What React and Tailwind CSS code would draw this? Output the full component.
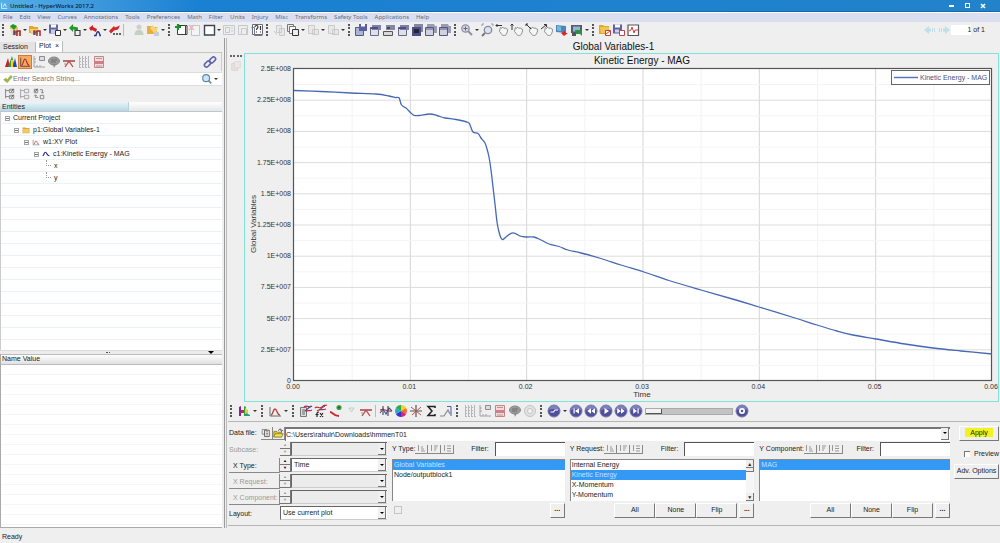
import React, { useState } from 'react';

const MENUS = ['File', 'Edit', 'View', 'Curves', 'Annotations', 'Tools', 'Preferences', 'Math', 'Filter', 'Units', 'Injury', 'Misc', 'Transforms', 'Safety Tools', 'Applications', 'Help'];

const PLOT = { left: 49, top: 15, right: 747, bottom: 327 };

const CURVE = [
  [49, 36.5], [76, 37.5], [106, 39], [131, 40], [144, 42], [150, 43.5], [154, 43.8], [156.5, 51], [161, 54], [166, 59], [169, 61.3],
  [174, 61.5], [185, 60], [192, 61.5], [200, 64], [211, 65.5], [223, 68.5], [225, 71], [228, 78], [233, 79.5],
  [236, 84], [240, 89], [242, 95], [244, 103], [246, 116], [248, 133], [250, 150], [252, 168], [254, 178],
  [256, 184], [258, 185.5], [261, 183], [266, 179.3], [270, 179.3], [275, 182], [281, 183], [289, 183], [296, 186],
  [304, 190], [314, 192.5], [323, 196], [336, 199], [356, 204.5], [376, 211], [399, 218], [424, 226.5], [456, 236],
  [491, 246], [514, 253], [550, 264], [572, 271], [592, 277], [608, 281], [631, 285], [660, 290], [688, 294], [716, 297], [747, 300],
];

const Y_TICKS = ['2.5E+008', '2.25E+008', '2E+008', '1.75E+008', '1.5E+008', '1.25E+008', '1E+008', '7.5E+007', '5E+007', '2.5E+007', '0'];
const X_TICKS = ['0.00', '0.01', '0.02', '0.03', '0.04', '0.05', '0.06'];

const TREE = [
  { label: 'Current Project', pad: 'pl-1', icon: null },
  { label: 'p1:Global Variables-1', pad: 'pl-[13px]', icon: 'folder' },
  { label: 'w1:XY Plot', pad: 'pl-[23px]', icon: 'curveBox' },
  { label: 'c1:Kinetic Energy - MAG', pad: 'pl-[33px]', icon: 'wave' },
];

const SHAPES = {
  openSession: <g><path d="M2 6V3h4l1 1h3v3" fill="#e9c53a" /><path d="M2 7h10v6H4z" fill="#e6e1c0" /><path d="M2 3l3-2 4 2-3 4z" fill="#1d9a2b" /><path d="M6 12V8h1.500M9 13V8h3v5" fill="none" stroke="#b0262c" strokeWidth="1.600" /><path d="M7 12V9h2" fill="none" stroke="#2746a8" strokeWidth="1.200" /></g>,
  openFolder: <g><path d="M1 3h4l1 1h4v6H1z" fill="#e0a92a" /><path d="M2 6h9l-1 5H3z" fill="#f5d271" /><path d="M6 12V8h1.500M9 13V8h3v5" fill="none" stroke="#b0262c" strokeWidth="1.500" /><path d="M7 12V9h2" fill="none" stroke="#2746a8" strokeWidth="1.200" /></g>,
  save: <g><path d="M1 1.500h9v9H1z" fill="#6468a8" /><path d="M3 1.500h5v3H3z" fill="#fff" /><path d="M3 6.500h5v4H3z" fill="#c9cbe6" /><path d="M7.500 7.500h5v5h-5z" fill="#fff" stroke="#333" /></g>,
  importModel: <g><path d="M1 5l4-4v2.500l5 1v3L5 6.500V9z" fill="#1c9d2a" /><path d="M7 7.500h5v5H7z" fill="#eee" stroke="#444" strokeWidth="1.200" /></g>,
  exportCurve: <g><path d="M1 5l4-3v2l4 2-1 3-4-2-1 1z" fill="#cf2226" /><path d="M6 12.500h2c1-5 3-5 4 0h1" fill="none" stroke="#26357f" strokeWidth="1.300" /></g>,
  exportPpt: <g><path d="M1 8l5-5 1 1.500 5-2-2 4-4 1-3 3z" fill="#d5262b" /><path d="M5 11h2M8 11h2M11 11h2" stroke="#333" strokeWidth="1.500" /></g>,
  user: <g opacity=".35"><circle cx="7" cy="4" r="2.500" fill="#8a9b8c" /><path d="M2.500 12c0-7 9-7 9 0z" fill="#6f9b76" /></g>,
  macro: <g><path d="M1 3h5l1 1h4v7H1z" fill="#e9ae3c" /><path d="M4 5l3-3 2 3 3-1-1 4-3 2z" fill="#f5d77b" /><path d="M8 9h5v4H8z" fill="#c8cdd6" /></g>,
  addPage: <g><path d="M3.500 2.500h8v9h-8zM11.500 2.500h1.500v9h-8" fill="#fff" stroke="#3d3d3d" /><path d="M1 4h6M4 1v6" stroke="#18912a" strokeWidth="2.200" /></g>,
  deletePage: <g opacity=".35"><path d="M3.500 2.500h8v10h-8z" fill="#fff" stroke="#777" /><path d="M1 2l5 5M6 2L1 7" stroke="#d55" strokeWidth="1.500" /></g>,
  layout: <path d="M2.500 2.500h10v9.500h-10z" fill="#fff" stroke="#3c4453" strokeWidth="1.400" />,
  expand: <g opacity=".4" stroke="#8b8f9c" fill="#eee"><path d="M1.500 2.500h11v9h-11z" /><path d="M3.500 4.500h4v5h-4zM9 5h2M9 8h2" /></g>,
  swap: <g opacity=".4" stroke="#8b8f9c" fill="#eee"><path d="M2.500 2.500h9v9h-9z" /><path d="M5.500 5.500h5v6h-5z" /></g>,
  pageTitle: <g><path d="M2.500 1.500h10v10h-10z" fill="#fff" stroke="#6b6b75" /><path d="M1.500 4.500h3v8h8" fill="none" stroke="#77798a" /><path d="M5 4c0-2 3-2 3 0 0 1-1.500 1-1.500 3M10.500 3v4M6.500 8.500v1M10.500 8.500v1" fill="none" stroke="#333" strokeWidth="1.200" /></g>,
  cut: <g opacity=".35" stroke="#888" fill="#ddd"><path d="M4.500 2.500h5v7h-5zM7.500 5.500h5v7h-5z" /><path d="M2 8l3 4" /></g>,
  copy: <g><path d="M1.500 1.500h6v7h-6z" fill="#eee" stroke="#777" /><path d="M3.500 3.500h6v7h-6z" fill="#fff" stroke="#777" /><path d="M6.500 6.500h6v6h-6z" fill="#eee" stroke="#333" /></g>,
  paste: <g opacity=".35" stroke="#888" fill="#ddd"><path d="M2.500 2.500h6v8h-6zM6.500 6.500h6v5h-6z" /></g>,
  pageSave: <g><path d="M1.500 4.500h8v8h-8z" fill="#aab4d6" stroke="#555a80" /><path d="M5 1h8v7H5z" fill="#5b5f9d" /><path d="M7 1h4v2.500H7z" fill="#fff" /></g>,
  pageOverlay: <g><path d="M2.500 5.500h8v7h-8z" fill="#dfe1ea" stroke="#666a88" /><path d="M4 2h9v5H4z" fill="#7e80a8" /><path d="M2 5h8" stroke="#3d3f70" strokeWidth="1.500" /></g>,
  pageBar: <g><path d="M4 2h9v5H4z" fill="#85879f" /><path d="M5 4h3v2H5z" fill="#3f427e" /><path d="M1.500 8.500h9v4h-9z" fill="#d8d8dc" stroke="#555" /></g>,
  pageFill: <g><path d="M4 1h9v8H4z" fill="#85879f" /><path d="M2 4h9v9H2z" fill="#4b4f86" /><path d="M4 6h5v4H4z" fill="#252636" /></g>,
  pageStack: <g><path d="M3 1h7l1 2h2v7H3z" fill="#9a9bb5" /><path d="M1.500 4.500h8v8h-8z" fill="#cfd0e0" stroke="#555880" /><path d="M2 6h8" stroke="#555880" /></g>,
  zoom: <g><path d="M8 8l4 4" stroke="#8f8f96" strokeWidth="2" /><circle cx="5.500" cy="5.500" r="3.700" fill="#d6d7e2" stroke="#8d8fa3" strokeWidth="1.300" /><path d="M3.500 5.500h4M5.500 3.500v4" stroke="#65678c" /></g>,
  zoomBox: <g><circle cx="8" cy="7" r="3.700" fill="#dde3ee" stroke="#8587a6" strokeWidth="1.300" /><path d="M5 10l-3 3" stroke="#777" strokeWidth="2" /><path d="M2 3V1h2M11 1h2v2" fill="none" stroke="#999" /></g>,
  hand: <g><path d="M5 6c0-2 1-2 1.500-.5C7 4 8.500 4 9 5.500c1-1 2-.5 2 .5 1-.5 2 0 1.500 2l-1 3c-1 2-4 2-5 0L4.500 8.500z" fill="#f6f6f6" stroke="#777" strokeWidth=".8" /><path d="M1 2.500h6M2.500 1L1 2.500 2.500 4" fill="none" stroke="#333" /></g>,
  handV: <g><path d="M5 6c0-2 1-2 1.500-.5C7 4 8.500 4 9 5.500c1-1 2-.5 2 .5 1-.5 2 0 1.500 2l-1 3c-1 2-4 2-5 0L4.500 8.500z" fill="#f6f6f6" stroke="#777" strokeWidth=".8" /><path d="M2 1v6M.5 2.500L2 1l1.500 1.500" fill="none" stroke="#333" /></g>,
  handD: <g><path d="M5 6c0-2 1-2 1.500-.5C7 4 8.500 4 9 5.500c1-1 2-.5 2 .5 1-.5 2 0 1.500 2l-1 3c-1 2-4 2-5 0L4.500 8.500z" fill="#f6f6f6" stroke="#777" strokeWidth=".8" /><path d="M1 1l5 5M1 3V1h2" fill="none" stroke="#333" /></g>,
  handU: <g><path d="M5 6c0-2 1-2 1.500-.5C7 4 8.500 4 9 5.500c1-1 2-.5 2 .5 1-.5 2 0 1.500 2l-1 3c-1 2-4 2-5 0L4.500 8.500z" fill="#f6f6f6" stroke="#777" strokeWidth=".8" /><path d="M1 6l5-4M4 1.500h2.500V4" fill="none" stroke="#333" /></g>,
  capture: <g><path d="M1 2l10 1v7L1 9z" fill="#4886bd" /><path d="M2 3l4 .5V8L2 7.500z" fill="#7db9d6" /><path d="M6 10l4-2 1 2 2 0-4 3z" fill="#d8262b" /></g>,
  captureArea: <g><path d="M1 2h11v8H1z" fill="#555c70" /><path d="M3 3.500h7v5H3z" fill="#8fb7cf" /><path d="M5 7h7v6l-2-2H6z" fill="#2f9143" /><path d="M2 10h4v3H2z" fill="#555" /></g>,
  folderRed: <g><path d="M1 2h4l1 1h5v8H1z" fill="#e0a92a" /><path d="M2 4h9l-1 6H3z" fill="#f0c556" /><path d="M7.500 7.500h5v5h-5z" fill="#fff" stroke="#b44" /><path d="M8 11l4-3" stroke="#b44" /></g>,
  saveRed: <g><path d="M1 1.500h9v9H1z" fill="#5f63a5" /><path d="M3 1.500h5v3H3z" fill="#fff" /><path d="M3 6.500h4v3H3z" fill="#d0d2ea" /><path d="M7.500 7.500h5v5h-5z" fill="#fff" stroke="#b44" /></g>,
  report: <g><path d="M2 2h10.500v10.500H2z" fill="#fff" stroke="#555" strokeWidth="1.200" /><path d="M3 8l2-1 1-3 2 6 1-3h3" fill="none" stroke="#e03a3f" /></g>,
  contour: <g><path d="M1 12l3-9 2 9z" fill="#c52127" /><path d="M4 12l4-11 3 11z" fill="#2aa13a" /><path d="M7 12V5h2v7z" fill="#f0d528" /><path d="M9 12l2-9 2 9z" fill="#2444ad" /></g>,
  curveBox: <g fill="none"><path d="M2 3v9h11" stroke="#666" /><path d="M3 11c2 0 2-6 4-6s2 6 5 6" stroke="#b83a3a" strokeWidth="1.300" /></g>,
  orangeCurve: <g fill="none"><path d="M2 2v10h11" stroke="#4b3b55" /><path d="M3 11c2 0 2-7.500 4-7.500s2 7.500 5 7.500" stroke="#a3312c" strokeWidth="1.300" /></g>,
  axisNote: <g><path d="M2 1v11h11M2 4h2M2 7h2M5 12v-2M8 12v-2" fill="none" stroke="#a2a2a8" /><path d="M7.500 1.500h5v4h-5z" fill="#ddd" stroke="#8b8b93" /></g>,
  note: <g><ellipse cx="7" cy="6" rx="5.500" ry="4" fill="#9a9a9a" stroke="#888" /><path d="M6 9l1 4 2-4z" fill="#888" /><path d="M4 5h6M4 7h5" stroke="#666" strokeWidth=".8" /></g>,
  datum: <g fill="none"><path d="M1 6h12" stroke="#a33434" strokeWidth="1.400" /><path d="M3 12l3.500-5h1L11 12" stroke="#c34a4a" strokeWidth="1.300" /><path d="M2 9h2" stroke="#999" /></g>,
  grid: <path d="M2.500 1v12M5.500 1v11M8.500 1v11M11.500 1v11M2 12.500h11M2 3.500h10M2 6.500h10M2 9.500h10" stroke="#b5b5ba" strokeDasharray="2 1" />,
  legend: <g><path d="M2.500 1.500h9v11h-9z" fill="#f4dada" stroke="#c98383" /><path d="M3 6h8v3H3z" fill="#cf7f86" /><path d="M4 3.500h6M4 11h6" stroke="#a99" /></g>,
  link: <g fill="none" stroke="#6263ab" strokeWidth="1.600"><rect x="1" y="7" width="7" height="4" rx="2" transform="rotate(-45 4.500 9)" /><rect x="6" y="3" width="7" height="4" rx="2" transform="rotate(-45 9.500 5)" /></g>,
  check: <path d="M1 8l3-2 2 2 5-6 2 2-7 8z" fill="#a5b83d" stroke="#6f8a34" strokeWidth=".7" />,
  treeA: <g fill="none" stroke="#7a7a82"><path d="M3 1v11M3 3h4M3 10h4" /><path d="M7.500 1.500h5v4h-5zM7.500 8.500h5v4h-5z" /><path d="M9 3l1 1 2-3M9 10l1 1 2-3" stroke="#333" /></g>,
  treeB: <g fill="none" stroke="#9c9ca3"><path d="M3 1v11M3 3h4M3 10h4" /><path d="M7.500 1.500h5v4h-5zM7.500 8.500h5v4h-5z" /></g>,
  treeC: <g fill="none" stroke="#7a7a82"><path d="M1.500 1.500h4v4h-4zM8.500 8.500h4v4h-4z" /><path d="M2 3l1 1 2-3" stroke="#333" /><path d="M8 2h3v4M9.500 4.500L11 6l1.500-1.500M6 11H3V8M1.500 9.500L3 8l1.500 1.500" /></g>,
  folder: <g><path d="M1 2.500h5l1 1h6v9H1z" fill="#d9a234" /><path d="M2 5h11v7H2z" fill="#f3c963" /></g>,
  wave: <path d="M1 10c3 0 2-6 5-6s2 6 7 6" fill="none" stroke="#20249a" strokeWidth="2" />,
  model: <g><path d="M2 12V3l2-1v10z" fill="#8a2391" /><path d="M4 6h4v3H4z" fill="#cf2c31" /><path d="M7 2l2 1v9H7z" fill="#33a23d" /><path d="M8 4l3 2v4H8z" fill="#e0cf32" /><path d="M9 9l4 2v1H9z" fill="#2a9c85" /></g>,
  calc: <g><path d="M1.500 3.500h6v9h-6z" fill="#ddd" stroke="#777" /><path d="M3 6h3M3 8h3M3 10h3" stroke="#666" /><path d="M5 3c3-3 4 2 8-1M7 8c2-3 3 0 6-2" fill="none" stroke="#c62b35" strokeWidth="1.300" /><path d="M6 7l6-5" fill="none" stroke="#3d4fae" strokeWidth="1.200" /></g>,
  fx: <g><path d="M1 4c3-3 4 2 7-1s3-1 5-2M3 7c3-3 5 0 9-2" fill="none" stroke="#c62b35" strokeWidth="1.300" /><path d="M5 6l6-4" stroke="#3d4fae" /><path d="M3 13V9c0-1 1-1 2-1M1.500 10.500h3M6 9l3 4M9 9l-3 4" fill="none" stroke="#222" strokeWidth="1.200" /></g>,
  addCurve: <g><path d="M1 8c3 0 3 4 9 4" fill="none" stroke="#cb2a2f" strokeWidth="1.800" /><circle cx="10" cy="3.500" r="2.600" fill="#43a749" /><path d="M8.500 3.500h3M10 2v3" stroke="#226e2a" /></g>,
  filterDim: <path d="M5 4h5L7.500 8z" fill="#e2f0e8" stroke="#b6cabf" strokeWidth=".8" />,
  curves: <g fill="none" strokeWidth="1.100"><path d="M1 9l3-4 3 5 3-6 3 3" stroke="#3f51b0" /><path d="M1 6c4-2 7 2 12 1" stroke="#bd3131" /><path d="M4 2v9M9 2v10" stroke="#444" /></g>,
  wheel: <g><path d="M7 7V1a6 6 0 0 1 5.200 3z" fill="#f0d22c" /><path d="M7 7l5.200-3a6 6 0 0 1 0 6z" fill="#ed702c" /><path d="M7 7l5.200 3A6 6 0 0 1 7 13z" fill="#d5257c" /><path d="M7 7v6a6 6 0 0 1-5.200-3z" fill="#3434c9" /><path d="M7 7l-5.200 3a6 6 0 0 1 0-6z" fill="#27a7d9" /><path d="M7 7L1.800 4A6 6 0 0 1 7 1z" fill="#2eab3b" /></g>,
  axes: <g fill="none"><path d="M7 1v12M1 7h12" stroke="#555" strokeWidth="1.200" /><path d="M2 3l10 8M12 3L3 11" stroke="#c24b4b" /></g>,
  sigma: <path d="M11 4V2.500H4L8 7l-4 4.500h7V10" fill="none" stroke="#222" strokeWidth="1.500" />,
  slope: <g fill="none"><path d="M1 12h4l4-6 2 4" stroke="#888" strokeWidth="1.200" /><path d="M8 2.500h4V12" stroke="#5357a8" /></g>,
  gearDim: <g fill="none" stroke="#c4c4c4"><circle cx="7" cy="7" r="5.500" fill="#e2e2e2" /><circle cx="7" cy="7" r="2.500" fill="#f3f3f3" /></g>,
  files: <g><path d="M1.500 2.500h6v6h-6z" fill="#eee" stroke="#777" /><path d="M4.500 3.500h6v8h-6z" fill="#fff" stroke="#444" /><path d="M6 5.500h3M6 7.500h3M6 9.500h3" stroke="#666" /></g>,
  open: <g><path d="M1 5h4l1 1h5v6H1z" fill="#d9c52e" stroke="#6d6414" strokeWidth=".8" /><path d="M3 8h10l-2 4H1z" fill="#f3e55b" stroke="#6d6414" strokeWidth=".8" /><path d="M7 4c1-3 4-2 4 0M9.500 3.500L11 5l1.500-1.500" fill="none" stroke="#222" /></g>,
  search: <g><path d="M8 8l4 4" stroke="#888" strokeWidth="2" /><circle cx="6" cy="6" r="4" fill="#cfe6f7" stroke="#5a8bb3" strokeWidth="1.400" /></g>,
  arrows: <g fill="#c0e0e9"><path d="M1 7l5-4v2.500h2v3H6V11z" /><path d="M9 5h1v4H9zM11 5h1v4h-1z" /></g>,
  arrowsR: <g fill="#c0e0e9"><path d="M13 7L8 3v2.500H6v3h2V11z" /><path d="M2 5h1v4H2zM4 5h1v4H4z" /></g>,
  ghost: <g opacity=".5"><path d="M2 4h7v8H2z" fill="#e3d3d3" stroke="#c9b4b4" /><path d="M5 2h7v7H5z" fill="#ece0e0" stroke="#cbbcbc" /></g>,
};

const PLAY_GLYPHS = {
  mode: <path d="M3.500 8h3l1.500-2h3" fill="none" stroke="#fff" strokeWidth="1.200" />,
  first: <path d="M4.500 4.500h1.200v5H4.500zM10 4.200v5.600L6 7z" fill="#fff" />,
  back: <path d="M7 4.300v5.400L3.300 7zM11 4.300v5.400L7.300 7z" fill="#fff" />,
  play: <path d="M5.500 4v6L10 7z" fill="#fff" />,
  forward: <path d="M3.200 4.300v5.400L6.900 7zM7 4.300v5.400L10.700 7z" fill="#fff" />,
  last: <path d="M8.500 4.500h1.200v5H8.500zM4.200 4.200v5.600L8 7z" fill="#fff" />,
  options: <g><circle cx="7" cy="7" r="3" fill="#fff" /><circle cx="7" cy="7" r="1.300" fill="#55559c" /></g>,
};

const TOP_BAR = [
  'handle', 'openSession', 'v', 'openFolder', 'v', 'save', 'v', 'importModel', 'v', 'exportCurve', 'v', 'exportPpt', 'sep', 'user', 'macro', 'v',
  'handle', 'addPage', 'deletePage', 'layout', 'v', 'expand', 'swap', 'pageTitle',
  'handle', 'cut', 'copy', 'v', 'paste', 'v', 'paste', 'v',
  'handle', 'pageSave', 'pageOverlay', 'pageBar', 'pageOverlay', 'pageFill', 'pageStack', 'pageStack',
  'handle', 'zoom', 'v',
];
const VIEW_BAR = ['zoomBox', 'hand', 'handV', 'handD', 'handU', 'capture', 'captureArea'];
const REPORT_BAR = ['v', 'handle', 'folderRed', 'saveRed', 'report'];

const PLOT_BAR = [
  'handle', 'model', 'v', 'handle', 'curveBox', 'v', 'handle', 'calc', 'fx', 'addCurve', 'filterDim', 'datum', 'line',
  'curves', 'wheel', 'axes', 'sigma', 'slope', 'handle', 'grid', 'axisNote', 'legend', 'note', 'gearDim', 'handle',
];

function Icon({ name, className = 'w-3.5 h-3.5' }) {
  return <svg viewBox="0 0 14 14" className={`${className} shrink-0`} aria-hidden="true">{SHAPES[name]}</svg>;
}

function PlayButton({ name }) {
  return (
    <button type="button" aria-label={name} className="w-[14px] h-[14px] shrink-0">
      <svg viewBox="0 0 14 14" className="w-full h-full">
        <circle cx="7" cy="7" r="6" fill="#50509a" stroke="#7676b0" />
        <path d="M2 6a5 5 0 0 1 10 0c-3-1.500-7-1.500-10 0z" fill="#7f7fbc" />
        {PLAY_GLYPHS[name]}
      </svg>
    </button>
  );
}

function Caret() {
  return (
    <span className="w-[6px] shrink-0 flex justify-center">
      <span className="border-x-2 border-x-transparent border-t-2 border-t-[#333]"></span>
    </span>
  );
}

function ToolItems({ items }) {
  return items.map((item, i) => {
    if (item === 'v') return <Caret key={i} />;
    if (item === 'handle') return <span key={i} className="w-2 h-3 shrink-0 pl-[2px]"><span className="block w-0 h-full border-l-2 border-dotted border-[#555]"></span></span>;
    if (item === 'sep') return <span key={i} className="w-[10px] h-3 shrink-0"><span className="block w-px h-full ml-px bg-[#bbb]"></span></span>;
    if (item === 'line') return <span key={i} className="w-[4px] h-3 shrink-0"><span className="block w-px h-full ml-px bg-[#bbb]"></span></span>;
    return <button key={i} type="button" aria-label={item} className="shrink-0"><Icon name={item} /></button>;
  });
}

function TitleBar() {
  return (
    <header className="h-3 flex items-center justify-between bg-gradient-to-r from-[#55aee6] via-[#1980d2] via-20% to-[#2283cb] border-b border-[#1769ab] pr-3">
      <div className="flex items-center gap-0.5">
        <svg viewBox="0 0 10 10" className="w-2 h-2.5"><path d="M2 1v7h7M4 6l2-4 2 4" fill="none" stroke="#d8efff" strokeWidth="1.200" /></svg>
        <h1 className="text-[6px] leading-[10px] font-medium text-[#0a1c33] font-['Noto_Sans',sans-serif]">Untitled - HyperWorks 2017.2</h1>
      </div>
      <div className="flex gap-[6px] items-center">
        <button type="button" aria-label="Minimize" className="w-[10px] h-[9px] flex justify-center items-center"><span className="w-[5px] h-0.5 bg-white"></span></button>
        <button type="button" aria-label="Restore" className="w-[10px] h-[9px] flex justify-center items-center"><span className="w-[5px] h-[5px] border border-white"></span></button>
        <button type="button" aria-label="Close" className="w-[10px] h-[9px] flex justify-center items-center">
          <svg viewBox="0 0 6 6" className="w-[6px] h-[6px]"><path d="M1 1l4 4M5 1L1 5" stroke="#fff" strokeWidth="1.500" /></svg>
        </button>
      </div>
    </header>
  );
}

function MenuBar() {
  return (
    <nav className="flex items-center gap-[7px] h-[10px] pl-[3px] bg-[#d9dff0] border-t border-white text-[6px] leading-[9px] text-[#666b7b] font-['Noto_Sans',sans-serif]">
      {MENUS.map((m) => <button key={m} type="button">{m}</button>)}
    </nav>
  );
}

function MainToolbar() {
  return (
    <div className="flex items-center h-4">
      <ToolItems items={TOP_BAR} />
      <div className="flex items-center gap-px"><ToolItems items={VIEW_BAR} /></div>
      <ToolItems items={REPORT_BAR} />
      <div className="ml-auto flex items-center pr-[15px] text-[7px]">
        <button type="button" aria-label="Previous page"><Icon name="arrows" /></button>
        <button type="button" aria-label="Next page"><Icon name="arrowsR" /></button>
        <label className="flex items-center gap-0.5">
          <input aria-label="Page" defaultValue="1" className="w-5 h-[10px] bg-white text-right" />
          of 1
        </label>
      </div>
    </div>
  );
}

function Expander() {
  return <span className="w-[5px] h-[5px] shrink-0 border border-[#a5a5a5] bg-white flex items-center"><span className="w-full h-px bg-[#777]"></span></span>;
}

function Browser() {
  return (
    <aside className="w-[225px] shrink-0 flex flex-col border-r border-[#9a9a9a] pr-[2px] pt-[3px]">
      <div className="flex items-end h-3 text-[7px] leading-[10px] border-b border-[#c4c4c4]">
        <button type="button" className="w-9 h-[10px] pl-[3px] text-left bg-[#e3e3e3] border-r border-[#bbb]">Session</button>
        <button type="button" className="h-[11px] px-[3px] flex gap-1 bg-white border-r border-[#bbb]"><span>Plot</span><span>×</span></button>
      </div>
      <div className="flex items-center h-[18px] pl-1 pr-1 border-r border-[#ccc]">
        <button type="button" aria-label="Contour"><Icon name="contour" /></button>
        <button type="button" aria-label="Curves" className="bg-[#f7a95f] border border-[#d07c35]"><Icon name="orangeCurve" className="w-3 h-3" /></button>
        <div className="flex gap-px">
          {['axisNote', 'note', 'datum', 'grid', 'legend'].map((n) => <button key={n} type="button" aria-label={n}><Icon name={n} /></button>)}
        </div>
        <button type="button" aria-label="Link" className="ml-auto"><Icon name="link" /></button>
      </div>
      <div className="flex items-center h-3.5 mt-px px-[3px] bg-white border-y border-[#ddd]">
        <Icon name="check" className="w-[10px] h-[10px]" />
        <input aria-label="Search" placeholder="Enter Search String..." className="flex-1 min-w-0 text-[7px] placeholder:text-[#777]" />
        <Icon name="search" className="w-3 h-3" />
        <Caret />
      </div>
      <div className="flex items-center h-4 pl-[2px] gap-px">
        {['treeA', 'treeB', 'treeC'].map((n) => <button key={n} type="button" aria-label={n}><Icon name={n} className="w-3.5 h-3" /></button>)}
      </div>
      <div className="flex h-[10px] text-[7px] leading-[10px] border-b border-[#b8c8d0] bg-gradient-to-b from-white to-[#e6e6e6]">
        <div className="w-[129px] pl-[2px] bg-gradient-to-b from-[#eaf5fa] to-[#b9d6e2] border-r border-[#bcd0da]">Entities</div>
      </div>
      <div className="flex-[237_1_0%] border-l border-[#ccc] text-[7px] bg-[repeating-linear-gradient(to_bottom,#fff_0px,#fff_11px,#e8f3f8_11px,#e8f3f8_12px)]">
        <ul>
          {TREE.map((row) => (
            <li key={row.label} className={`flex items-center h-3 gap-[3px] ${row.pad}`}>
              <Expander />
              {row.icon ? <Icon name={row.icon} className="w-2 h-2" /> : null}
              <span>{row.label}</span>
            </li>
          ))}
          {['x', 'y'].map((axis) => (
            <li key={axis} className="flex items-center h-3 gap-[3px] pl-[45px]">
              <span className="w-[5px] h-[6px] mb-[6px] border-l border-b border-dotted border-[#999]"></span>
              <span>{axis}</span>
            </li>
          ))}
        </ul>
      </div>
      <div className="h-1 flex items-center justify-end bg-[#ececec] border-t border-[#ddd] pr-2 gap-[98px]">
        <span className="w-1 border-t border-dotted border-[#555]"></span>
        <span className="border-x-[3px] border-x-transparent border-t-[3px] border-t-black"></span>
      </div>
      <div className="flex-[173_1_0%] flex flex-col border-l border-b border-[#aaa]">
        <div className="h-[11px] pl-px flex gap-0.5 items-center text-[7px] border-y border-[#bbb] bg-gradient-to-b from-white to-[#e0e0e0]">
          <span>Name</span>
          <span>Value</span>
        </div>
        <div className="flex-1 bg-[repeating-linear-gradient(to_bottom,#fff_0px,#fff_9px,#f6f6f6_9px,#f6f6f6_10px)]"></div>
      </div>
    </aside>
  );
}

// Catmull-Rom spline through the sampled points
function toPath(points) {
  let d = `M${points[0][0]} ${points[0][1]}`;
  for (let i = 0; i < points.length - 1; i++) {
    const p0 = points[i - 1] || points[i];
    const p1 = points[i];
    const p2 = points[i + 1];
    const p3 = points[i + 2] || p2;
    d += `C${p1[0] + (p2[0] - p0[0]) / 6} ${p1[1] + (p2[1] - p0[1]) / 6} ${p2[0] - (p3[0] - p1[0]) / 6} ${p2[1] - (p3[1] - p1[1]) / 6} ${p2[0]} ${p2[1]}`;
  }
  return d;
}

function Chart() {
  const { left, top, right, bottom } = PLOT;
  const stepX = (right - left) / 12;
  const stepY = (bottom - top) / 20;
  return (
    <svg viewBox="0 0 753 347" className="block w-full h-auto overflow-visible font-['Liberation_Sans',sans-serif]" role="img" aria-label="Kinetic Energy - MAG">
      <rect x={left} y={top} width={right - left} height={bottom - top} fill="#fff" />
      {Array.from({ length: 11 }, (_, i) => (
        <path key={i} d={`M${left + stepX * (i + 1)} ${top}V${bottom}`} stroke={i % 2 ? '#d6d6d6' : '#f3f3f3'} />
      ))}
      {Array.from({ length: 19 }, (_, i) => (
        <path key={i} d={`M${left} ${top + stepY * (i + 1)}H${right}`} stroke={i % 2 ? '#dcdcdc' : '#f4f4f4'} />
      ))}
      <rect x={left - 0.5} y={top - 0.5} width={right - left} height={bottom - top} fill="none" stroke="#555" strokeWidth="1.200" />
      <path d={toPath(CURVE)} fill="none" stroke="#4668b4" strokeWidth="1.300" />
      <text x="397" y="10" fontSize="10" textAnchor="middle" fill="#111">Kinetic Energy - MAG</text>
      {Y_TICKS.map((t, i) => (
        <text key={t} x="46" y={top + stepY * 2 * i + 2} fontSize="7" textAnchor="end" fill="#333">{t}</text>
      ))}
      {X_TICKS.map((t, i) => (
        <text key={t} x={left + stepX * 2 * i - 1} y="335" fontSize="7" textAnchor="middle" fill="#333">{t}</text>
      ))}
      <text x="397" y="343" fontSize="8" textAnchor="middle" fill="#333">Time</text>
      <text x="11" y="170" fontSize="8" textAnchor="middle" fill="#333" transform="rotate(-90 11 170)">Global Variables</text>
      <rect x="646.5" y="16.5" width="98" height="14" fill="#fff" stroke="#666" />
      <path d="M649 23.500h24" stroke="#5675bb" strokeWidth="1.500" />
      <text x="675" y="26" fontSize="7" fill="#3f5484">Kinetic Energy - MAG</text>
    </svg>
  );
}

function PlotArea() {
  return (
    <section className="flex">
      <div className="w-4 shrink-0 pt-[17px] flex flex-col items-center gap-[3px]">
        <span className="w-3 border-t-2 border-dotted border-[#666]"></span>
        <Icon name="ghost" className="w-3 h-3" />
      </div>
      <div className="flex-1 min-w-0 pr-px">
        <h2 className="pt-[3px] pr-4 text-[10px] leading-3 text-center text-[#111]">Global Variables-1</h2>
        <div className="border border-[#7fe3da]"><Chart /></div>
      </div>
    </section>
  );
}

function PlotToolbar() {
  const [frame, setFrame] = useState(0);
  return (
    <div className="flex items-center gap-px h-[18px] mb-px">
      <ToolItems items={PLOT_BAR} />
      <PlayButton name="mode" />
      <Caret />
      {['first', 'back', 'play', 'forward', 'last'].map((n) => <PlayButton key={n} name={n} />)}
      <input
        type="range"
        aria-label="Frame"
        value={frame}
        onChange={(e) => setFrame(Number(e.target.value))}
        className="appearance-none w-[88px] h-[7px] ml-px mr-px bg-[#c3c3c3] border border-[#aaa] [&::-webkit-slider-thumb]:appearance-none [&::-webkit-slider-thumb]:w-4 [&::-webkit-slider-thumb]:h-[5px] [&::-webkit-slider-thumb]:bg-[#f2f2f2] [&::-webkit-slider-thumb]:border-b [&::-webkit-slider-thumb]:border-r [&::-webkit-slider-thumb]:border-[#555]"
      />
      <PlayButton name="options" />
    </div>
  );
}

function DropArrow() {
  return (
    <span className="absolute right-px top-px bottom-px w-2 bg-[#f0f0f0] border-r border-b border-[#777] pointer-events-none flex items-center justify-center">
      <span className="border-x-2 border-x-transparent border-t-2 border-t-black"></span>
    </span>
  );
}

function Spinner({ disabled }) {
  const tone = disabled ? 'text-[#999]' : 'text-black';
  return (
    <div className={`w-[11px] h-[14px] shrink-0 flex flex-col text-[4px] leading-[6px] ${tone}`}>
      <button type="button" disabled={disabled} aria-label="Previous" className="flex-1 border-b border-r border-[#777]">▲</button>
      <button type="button" disabled={disabled} aria-label="Next" className="flex-1 border-b border-r border-[#777]">▼</button>
    </div>
  );
}

function Field({ label, id, value, disabled, spinner = true, raised }) {
  return (
    <div className="flex items-center h-4">
      <label htmlFor={id} className={`w-[51px] h-[15px] leading-[15px] shrink-0 whitespace-nowrap ${raised ? 'pl-1 border-b border-r border-[#888]' : ''} ${disabled ? 'text-[#9a9a9a]' : ''}`}>{label}</label>
      {spinner ? <Spinner disabled={disabled} /> : null}
      <div className="relative flex-1 min-w-0">
        <select id={id} disabled={disabled} className={`appearance-none block w-full h-[14px] pl-[2px] border-l border-t border-[#666] border-b border-b-[#ccc] opacity-100 ${disabled ? 'bg-[#ececec]' : 'bg-white'}`}>
          <option>{value}</option>
        </select>
        <DropArrow />
      </div>
    </div>
  );
}

function MiniButton({ children, className = '' }) {
  return <button type="button" className={`h-[15px] text-center border-t border-l border-t-white border-l-white border-b border-r border-b-[#777] border-r-[#777] ${className}`}>{children}</button>;
}

function SortButtons() {
  return (
    <div className="flex">
      {[0, 1, 2].map((n) => (
        <button key={n} type="button" aria-label={`Sort ${n + 1}`} className="w-[13px] h-[9px] border-r border-b border-[#888] flex items-center justify-center">
          <svg viewBox="0 0 9 7" className="w-[9px] h-[7px]"><path d={n === 0 ? 'M1.500 0v6M4 2h2M4 4h3M4 6h4' : n === 1 ? 'M1.500 0v6M4 1h4M4 3h3M4 5h2' : 'M1.500 0v6M4 1h4M4 3.500h4M4 6h4'} fill="none" stroke="#999" /></svg>
        </button>
      ))}
    </div>
  );
}

function ListColumn({ id, label, items, initial, className, scroll, pick }) {
  const [selected, setSelected] = useState(initial);
  return (
    <div className={`min-w-0 ${className}`}>
      <div className="flex items-center h-4">
        <span>{label}</span>
        <SortButtons />
        <label htmlFor={id} className="ml-auto pr-[6px]">Filter:</label>
        <input id={id} className="w-[70px] h-[14px] bg-white border-l border-t border-[#555]" />
      </div>
      <div className="mt-[2px] h-[42px] flex bg-white border-l border-t border-[#888]">
        <ul className="flex-1 min-w-0">
          {items.map((item) => (
            <li key={item}>
              <button
                type="button"
                onClick={() => setSelected(item)}
                className={`block w-full h-[10px] leading-[10px] text-left pl-px ${item === selected ? 'bg-[#3399f5] text-[#c5e2ff]' : ''}`}
              >
                {item}
              </button>
            </li>
          ))}
        </ul>
        {scroll ? (
          <div className="w-2 bg-[#f6f6f6] flex flex-col justify-between text-[5px] leading-[8px]">
            <div>
              <button type="button" aria-label="Scroll up" className="block w-full h-2 bg-[#eee] border-r border-b border-[#777]">▲</button>
              <div className="h-1 bg-[#eee] border-r border-b border-[#777]"></div>
            </div>
            <button type="button" aria-label="Scroll down" className="block w-full h-2 bg-[#eee] border-r border-b border-[#777]">▼</button>
          </div>
        ) : null}
      </div>
      <div className="flex justify-end mt-[2px]">
        {pick ? ['All', 'None', 'Flip'].map((n) => <MiniButton key={n} className="w-[41px]">{n}</MiniButton>) : <input type="checkbox" disabled aria-label="Lock" className="appearance-none w-2 h-2 mt-[3px] ml-[2px] mr-auto border border-[#c4c4c4]" />}
        <MiniButton className="w-[15px] ml-[2px] pb-1 font-bold leading-[8px]">...</MiniButton>
      </div>
    </div>
  );
}

function DataPanel() {
  return (
    <section className="flex gap-1 pl-px pr-px pt-1 pb-1 border-t border-b border-[#b5b5b5] text-[7px]">
      <div className="flex-1 min-w-0">
        <div className="flex items-center h-[15px]">
          <label htmlFor="datafile" className="w-8">Data file:</label>
          <button type="button" aria-label="Recent files" className="border-r border-b border-[#888]"><Icon name="files" className="w-[11px] h-3" /></button>
          <button type="button" aria-label="Open file" className="border-r border-b border-[#888]"><Icon name="open" className="w-[11px] h-3" /></button>
          <div className="relative flex-1">
            <input id="datafile" defaultValue="C:\Users\rahulr\Downloads\hmmenT01" className="block w-full h-[14px] bg-white border-l border-t-2 border-[#777]" />
            <DropArrow />
          </div>
        </div>
        <div className="flex gap-[5px]">
          <div className="w-[158px] shrink-0">
            <Field id="subcase" label="Subcase:" value="" disabled />
            <Field id="xtype" label="X Type:" value="Time" raised />
            <Field id="xrequest" label="X Request:" value="" disabled raised />
            <Field id="xcomponent" label="X Component:" value="" disabled raised />
            <Field id="layout" label="Layout:" value="Use current plot" spinner={false} />
          </div>
          <ListColumn id="ftype" label="Y Type:" items={['Global Variables', 'Node/outputblock1']} initial="Global Variables" className="flex-[173_1_0%]" />
          <ListColumn id="freq" label="Y Request:" items={['Internal Energy', 'Kinetic Energy', 'X-Momentum', 'Y-Momentum']} initial="Kinetic Energy" className="flex-[185_1_0%]" scroll pick />
          <ListColumn id="fcomp" label="Y Component:" items={['MAG']} initial="MAG" className="flex-[191_1_0%]" pick />
        </div>
      </div>
      <div className="w-[45px] shrink-0 flex flex-col items-end">
        <MiniButton className="w-10"><span className="bg-[#f2f21e] px-[5px] py-px">Apply</span></MiniButton>
        <label className="flex items-center gap-1 mt-2">
          <input type="checkbox" className="appearance-none w-[6px] h-[6px] border-l border-t border-[#777] bg-white" />
          Preview
        </label>
        <MiniButton className="w-full mt-1 whitespace-nowrap">Adv. Options</MiniButton>
      </div>
    </section>
  );
}

function App() {
  return (
    <div className="min-h-screen flex flex-col bg-[#efefef] text-[#222] font-['Liberation_Sans',Arial,sans-serif]">
      <TitleBar />
      <MenuBar />
      <MainToolbar />
      <div className="flex-1 flex">
        <Browser />
        <main className="flex-1 min-w-0 flex flex-col border-l border-[#bbb] ml-px pl-px">
          <PlotArea />
          <PlotToolbar />
          <DataPanel />
        </main>
      </div>
      <footer className="h-[15px] pl-[2px] pt-[3px] text-[7px] leading-[12px]">Ready</footer>
    </div>
  );
}

export default App;
